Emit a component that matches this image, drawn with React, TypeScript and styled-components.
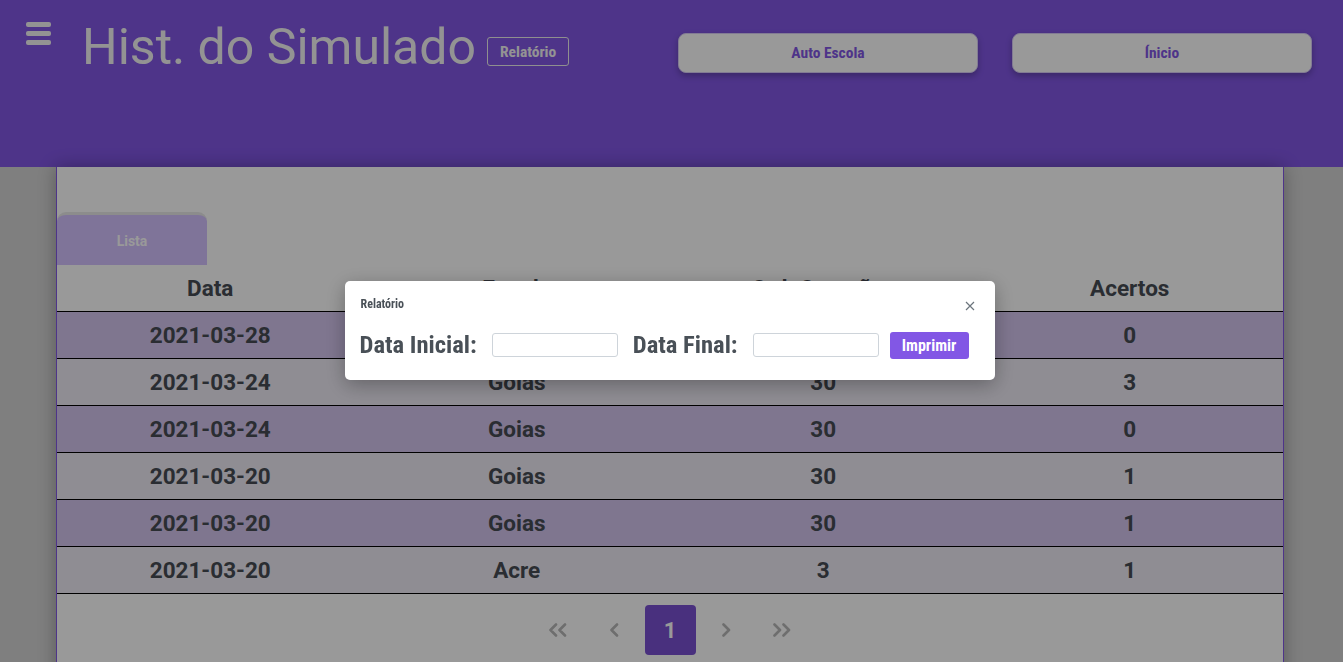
import React from "react";
import styled, { createGlobalStyle } from "styled-components";

const GlobalStyle = createGlobalStyle`
  html, body { margin: 0; padding: 0; }
  body {
    background: #d4d4d4;
    font-family: Roboto, "Liberation Sans", sans-serif;
    overflow: hidden;
  }
`;

const condensed = `"Roboto Condensed", "Liberation Sans Narrow", "DejaVu Sans Condensed", Roboto, sans-serif`;

const Page = styled.div`
  min-height: 662px;
`;

const Header = styled.header`
  height: 167px;
  background: #8257e5;
  display: flex;
  align-items: flex-start;
  padding: 22px 31px 0 26px;
  box-sizing: border-box;
`;

const Burger = styled.div`
  display: flex;
  flex-direction: column;
  gap: 4px;
  width: 25px;
  margin-right: 31px;
`;

const BurgerBar = styled.span`
  display: block;
  height: 5px;
  border-radius: 2px;
  background: #f6f6f6;
`;

const Title = styled.h1`
  margin: -4px 0 0 0;
  font-family: Roboto, sans-serif;
  font-weight: 400;
  font-size: 50px;
  line-height: 58px;
  color: #f6f6f6;
`;

const OutlineButton = styled.button`
  margin: 15px 0 0 11px;
  height: 29px;
  padding: 0 12px;
  background: transparent;
  border: 1px solid #eeeeee;
  border-radius: 3px;
  color: #f6f6f6;
  font-family: ${condensed};
  font-weight: 700;
  font-size: 15.5px;
`;

const NavGroup = styled.nav`
  margin-left: auto;
  margin-top: 11px;
  display: flex;
  gap: 34px;
`;

const NavButton = styled.button`
  width: 300px;
  height: 40px;
  background: #ffffff;
  border: 1px solid #d9cdf7;
  border-radius: 8px;
  box-shadow: 0 3px 6px rgba(0, 0, 0, 0.25);
  color: #8257e5;
  font-family: ${condensed};
  font-weight: 700;
  font-size: 15.5px;
`;

const Card = styled.main`
  margin: 0 59px 0 56px;
  min-height: 520px;
  background: #ffffff;
  border: 1px solid #8257e5;
  border-top: none;
  border-radius: 0 0 8px 8px;
  box-shadow: 0 0 18px rgba(0, 0, 0, 0.3);
  padding-top: 45px;
`;

const TabBar = styled.div`
  display: flex;
`;

const Tab = styled.div`
  width: 150px;
  height: 53px;
  box-sizing: border-box;
  border-top: 3px solid #e9e9e9;
  border-radius: 9px 9px 0 0;
  background: #d4c1ff;
  color: #ffffff;
  font-family: Roboto, sans-serif;
  font-weight: 700;
  font-size: 14px;
  display: flex;
  align-items: center;
  justify-content: center;
  padding-top: 2px;
`;

const Table = styled.div`
  display: grid;
  grid-template-columns: repeat(4, 1fr);
  border-bottom: 1px solid #000;
`;

const HeadCell = styled.div`
  height: 46px;
  display: flex;
  align-items: center;
  justify-content: center;
  font-family: Roboto, sans-serif;
  font-weight: 700;
  font-size: 22.5px;
  color: #474c54;
`;

const Cell = styled.div<{ $striped: boolean }>`
  height: 46px;
  border-top: 1px solid #000;
  background: ${(p) => (p.$striped ? "#d4c5ee" : "#eeebf5")};
  display: flex;
  align-items: center;
  justify-content: center;
  font-family: Roboto, sans-serif;
  font-weight: 700;
  font-size: 22.5px;
  color: #474c54;
`;

const Pager = styled.div`
  display: flex;
  justify-content: center;
  gap: 5px;
  padding: 11px 0 20px;
`;

const PageItem = styled.button<{ $active?: boolean }>`
  width: 51px;
  height: 50px;
  border: none;
  border-radius: 4px;
  background: ${(p) => (p.$active ? "#7a50d2" : "transparent")};
  color: ${(p) => (p.$active ? "#ffffff" : "#b8b8b8")};
  font-family: Roboto, sans-serif;
  font-weight: 700;
  font-size: 22px;
  display: flex;
  align-items: center;
  justify-content: center;
  padding: 0;
`;

const Backdrop = styled.div`
  position: fixed;
  inset: 0;
  background: rgba(0, 0, 0, 0.4);
  display: flex;
  justify-content: center;
  align-items: flex-start;
  padding-top: 281px;
  box-sizing: border-box;
`;

const Modal = styled.div`
  width: 650px;
  height: 99px;
  box-sizing: border-box;
  background: #ffffff;
  border-radius: 5px;
  box-shadow: 0 5px 20px rgba(0, 0, 0, 0.3);
  padding: 14px 16px 0 16px;
  margin-left: -4px;
`;

const ModalHead = styled.div`
  display: flex;
  align-items: center;
  justify-content: space-between;
  height: 17px;
`;

const ModalTitle = styled.h5`
  margin: 0;
  font-family: ${condensed};
  font-weight: 700;
  font-size: 12px;
  color: #495057;
`;

const Close = styled.button`
  border: none;
  background: none;
  padding: 0;
  margin-right: 4px;
  margin-top: 4px;
  color: #6c757d;
  display: flex;
`;

const ModalBody = styled.div`
  display: flex;
  align-items: center;
  margin-top: 18px;
  margin-left: -1px;
`;

const Label = styled.label`
  font-family: ${condensed};
  font-weight: 700;
  font-size: 24.6px;
  color: #495057;
  margin-right: 15px;
`;

const DateInput = styled.input`
  width: 126px;
  height: 24px;
  box-sizing: border-box;
  border: 1px solid #ced4da;
  border-radius: 3px;
  margin-right: 15px;
`;

const PrintButton = styled.button`
  margin-left: -4px;
  margin-top: 1px;
  width: 79px;
  height: 27px;
  border: none;
  border-radius: 3px;
  background: #8257e5;
  color: #ffffff;
  font-family: ${condensed};
  font-weight: 700;
  font-size: 16px;
  padding: 0;
`;

const Chevrons = ({ dir, double }: { dir: "left" | "right"; double?: boolean }) => {
  const w = double ? 20 : 10;
  const one = (x: number) =>
    dir === "left" ? `M${x + 7} 1.5L${x + 1.5} 7L${x + 7} 12.5` : `M${x + 1.5} 1.5L${x + 7} 7L${x + 1.5} 12.5`;
  const d = double ? `${one(1)} ${one(10)}` : one(1);
  return (
    <svg width={w} height="14" viewBox={`0 0 ${w} 14`}>
      <path d={d} fill="none" stroke="currentColor" strokeWidth="2.6" strokeLinecap="round" strokeLinejoin="round" />
    </svg>
  );
};

const rows = [
  ["2021-03-28", "Goias", "30", "0"],
  ["2021-03-24", "Goias", "30", "3"],
  ["2021-03-24", "Goias", "30", "0"],
  ["2021-03-20", "Goias", "30", "1"],
  ["2021-03-20", "Goias", "30", "1"],
  ["2021-03-20", "Acre", "3", "1"],
];

export default function App() {
  return (
    <Page>
      <GlobalStyle />
      <Header>
        <Burger>
          <BurgerBar />
          <BurgerBar />
          <BurgerBar />
        </Burger>
        <Title>Hist. do Simulado</Title>
        <OutlineButton>Relatório</OutlineButton>
        <NavGroup>
          <NavButton>Auto Escola</NavButton>
          <NavButton>Ínicio</NavButton>
        </NavGroup>
      </Header>
      <Card>
        <TabBar>
          <Tab>Lista</Tab>
        </TabBar>
        <Table>
          {["Data", "Estado", "Qtd. Questões", "Acertos"].map((h) => (
            <HeadCell key={h}>{h}</HeadCell>
          ))}
          {rows.map((r, i) =>
            r.map((c, j) => (
              <Cell key={`${i}-${j}`} $striped={i % 2 === 0}>
                {c}
              </Cell>
            ))
          )}
        </Table>
        <Pager>
          <PageItem aria-label="Primeira">
            <Chevrons dir="left" double />
          </PageItem>
          <PageItem aria-label="Anterior">
            <Chevrons dir="left" />
          </PageItem>
          <PageItem $active>1</PageItem>
          <PageItem aria-label="Próxima">
            <Chevrons dir="right" />
          </PageItem>
          <PageItem aria-label="Última">
            <Chevrons dir="right" double />
          </PageItem>
        </Pager>
      </Card>
      <Backdrop>
        <Modal>
          <ModalHead>
            <ModalTitle>Relatório</ModalTitle>
            <Close aria-label="Fechar">
              <svg width="10" height="10" viewBox="0 0 10 10">
                <path d="M1 1L9 9M9 1L1 9" stroke="#6c757d" strokeWidth="1.2" />
              </svg>
            </Close>
          </ModalHead>
          <ModalBody>
            <Label>Data Inicial:</Label>
            <DateInput type="text" />
            <Label>Data Final:</Label>
            <DateInput type="text" />
            <PrintButton>Imprimir</PrintButton>
          </ModalBody>
        </Modal>
      </Backdrop>
    </Page>
  );
}
